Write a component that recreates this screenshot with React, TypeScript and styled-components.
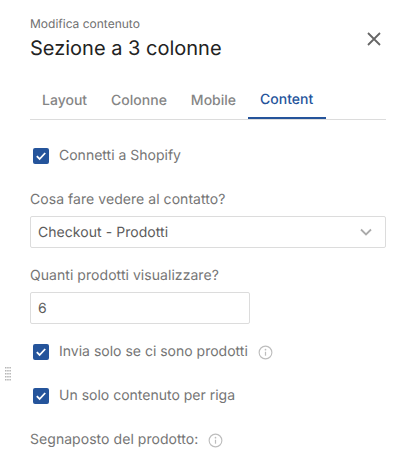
import React from "react";
import styled, { createGlobalStyle } from "styled-components";

const GlobalStyle = createGlobalStyle`
  html, body {
    margin: 0;
    padding: 0;
    background: #fff;
    overflow: hidden;
  }
  body {
    font-family: Inter, "Liberation Sans", sans-serif;
    text-rendering: geometricPrecision;
  }
`;

const Panel = styled.div`
  position: relative;
  width: 412px;
  height: 468px;
  box-sizing: border-box;
  padding: 16px 26px 0 30px;
  overflow: hidden;
`;

const Header = styled.div`
  display: flex;
  justify-content: space-between;
  align-items: flex-start;
  height: 65px;
`;

const SubTitle = styled.div`
  font-size: 12px;
  line-height: 16px;
  color: #6f6f6f;
`;

const Title = styled.div`
  font-size: 20px;
  line-height: 26px;
  margin-top: 3px;
  color: #222;
`;

const CloseButton = styled.button`
  border: 0;
  background: none;
  padding: 0;
  margin: 15px 4px 0 0;
  width: 16px;
  height: 16px;
  display: block;
  color: #666;
`;

const Tabs = styled.div`
  display: flex;
  height: 38px;
  border-bottom: 1px solid #dcdcdc;
`;

const Tab = styled.div<{ $active?: boolean }>`
  padding: 0 ${(p) => (p.$active ? "13px" : "12px")} 0 12px;
  height: 38px;
  box-sizing: border-box;
  display: flex;
  align-items: center;
  font-size: 14px;
  font-weight: 500;
  color: ${(p) => (p.$active ? "#25549b" : "#858585")};
  border-bottom: ${(p) => (p.$active ? "2px solid #25549b" : "none")};
`;

const CheckRow = styled.div<{ $top: number }>`
  display: flex;
  align-items: center;
  height: 20px;
  margin: ${(p) => p.$top}px 0 0 3px;
`;

const CheckBox = styled.span`
  width: 16px;
  height: 16px;
  border-radius: 2px;
  background: #25549b;
  display: flex;
  align-items: center;
  justify-content: center;
  margin-right: 10px;
`;

const CheckLabel = styled.span`
  font-size: 14px;
  margin-top: -2px;
  color: #757575;
`;

const FieldLabel = styled.div<{ $top: number }>`
  font-size: 14px;
  line-height: 18px;
  letter-spacing: 0.05px;
  margin-top: ${(p) => p.$top}px;
  color: #757575;
  display: flex;
  align-items: center;
`;

const InputBox = styled.div<{ $width: number }>`
  width: ${(p) => p.$width}px;
  height: 32px;
  box-sizing: border-box;
  margin-top: 7px;
  border: 1px solid #dcdcdc;
  border-radius: 2px;
  padding: 0 12px 0 7px;
  display: flex;
  align-items: center;
  justify-content: space-between;
  font-size: 14px;
  letter-spacing: 0.05px;
  color: #5c5c5c;
`;

const InfoIcon = styled.svg`
  width: 15px;
  height: 15px;
  margin-left: 10px;
  color: #bdbdbd;
  display: block;
`;

const DragHandle = styled.svg`
  position: absolute;
  left: 5px;
  top: 367px;
  width: 6px;
  height: 14px;
  color: #b5b5b5;
`;

const Check = () => (
  <svg width="12" height="12" viewBox="0 0 12 12" fill="none">
    <path d="M1.8 6.2 4.6 9l5.6-6" stroke="#fff" strokeWidth="1.8" />
  </svg>
);

const Info = () => (
  <InfoIcon viewBox="0 0 16 16" fill="none">
    <circle cx="8" cy="8" r="6.8" stroke="currentColor" strokeWidth="1.2" />
    <path d="M8 7.2v4.2" stroke="currentColor" strokeWidth="1.3" />
    <circle cx="8" cy="5" r="0.9" fill="currentColor" />
  </InfoIcon>
);

const dots = [0, 1, 2, 3, 4].flatMap((r) => [0, 1, 2].map((c) => [c, r]));

export default function App() {
  return (
    <>
      <GlobalStyle />
      <Panel>
        <DragHandle viewBox="0 0 6 14">
          {dots.map(([c, r]) => (
            <rect key={`${c}-${r}`} x={c * 2.2} y={r * 3} width="1.5" height="1.5" fill="currentColor" />
          ))}
        </DragHandle>
        <Header>
          <div>
            <SubTitle>Modifica contenuto</SubTitle>
            <Title>Sezione a 3 colonne</Title>
          </div>
          <CloseButton aria-label="Chiudi">
            <svg width="16" height="16" viewBox="0 0 16 16" fill="none">
              <path d="M2 2l12 12M14 2 2 14" stroke="currentColor" strokeWidth="1.8" />
            </svg>
          </CloseButton>
        </Header>
        <Tabs>
          <Tab>Layout</Tab>
          <Tab>Colonne</Tab>
          <Tab>Mobile</Tab>
          <Tab $active>Content</Tab>
        </Tabs>
        <CheckRow $top={26}>
          <CheckBox><Check /></CheckBox>
          <CheckLabel>Connetti a Shopify</CheckLabel>
        </CheckRow>
        <FieldLabel $top={25}>Cosa fare vedere al contatto?</FieldLabel>
        <InputBox $width={356}>
          Checkout - Prodotti
          <svg width="14" height="14" viewBox="0 0 14 14" fill="none">
            <path d="M2 4.5 7 9.5l5-5" stroke="#aaa" strokeWidth="1.8" />
          </svg>
        </InputBox>
        <FieldLabel $top={19}>Quanti prodotti visualizzare?</FieldLabel>
        <InputBox $width={220}>6</InputBox>
        <CheckRow $top={18}>
          <CheckBox><Check /></CheckBox>
          <CheckLabel>Invia solo se ci sono prodotti</CheckLabel>
          <Info />
        </CheckRow>
        <CheckRow $top={24}>
          <CheckBox><Check /></CheckBox>
          <CheckLabel>Un solo contenuto per riga</CheckLabel>
        </CheckRow>
        <FieldLabel $top={25}>
          Segnaposto del prodotto:
          <Info />
        </FieldLabel>
      </Panel>
    </>
  );
}
